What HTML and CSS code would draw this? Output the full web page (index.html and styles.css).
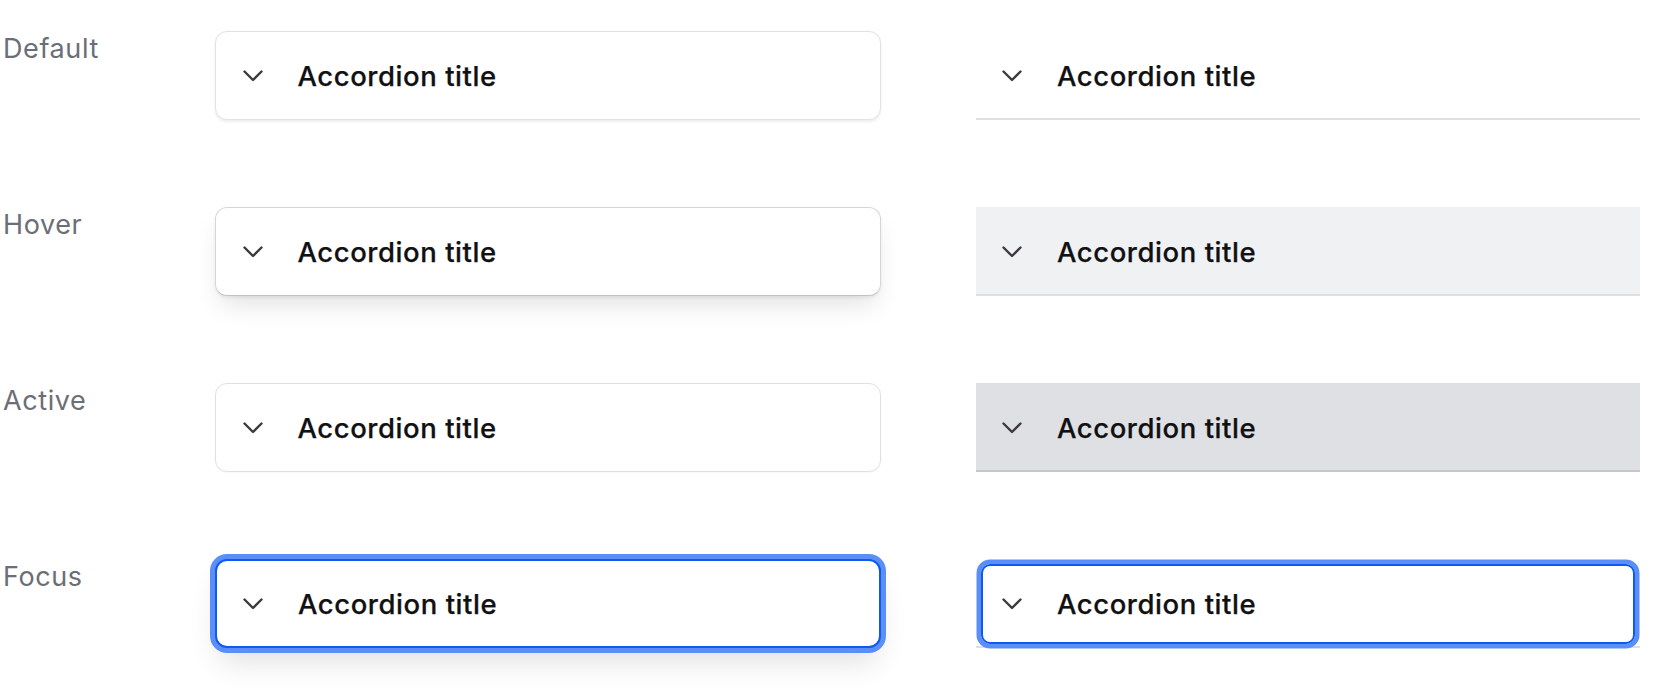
FILE: index.html
```html
<!DOCTYPE html>
<html lang="en">
<head>
<meta charset="utf-8">
<title>Accordion states</title>
<link rel="stylesheet" href="styles.css">
</head>
<body>
<div class="states">
  <div class="label">Default</div>
  <div class="cell">
    <div class="acc box">
      <svg class="chev" viewBox="0 0 20 12"><polyline points="1.5,1.5 10,10 18.5,1.5"/></svg>
      <span class="title">Accordion title</span>
    </div>
  </div>
  <div class="cell">
    <div class="acc flush">
      <svg class="chev" viewBox="0 0 20 12"><polyline points="1.5,1.5 10,10 18.5,1.5"/></svg>
      <span class="title">Accordion title</span>
    </div>
  </div>

  <div class="label">Hover</div>
  <div class="cell">
    <div class="acc box hover">
      <svg class="chev" viewBox="0 0 20 12"><polyline points="1.5,1.5 10,10 18.5,1.5"/></svg>
      <span class="title">Accordion title</span>
    </div>
  </div>
  <div class="cell">
    <div class="acc flush hover">
      <svg class="chev" viewBox="0 0 20 12"><polyline points="1.5,1.5 10,10 18.5,1.5"/></svg>
      <span class="title">Accordion title</span>
    </div>
  </div>

  <div class="label">Active</div>
  <div class="cell">
    <div class="acc box active">
      <svg class="chev" viewBox="0 0 20 12"><polyline points="1.5,1.5 10,10 18.5,1.5"/></svg>
      <span class="title">Accordion title</span>
    </div>
  </div>
  <div class="cell">
    <div class="acc flush active">
      <svg class="chev" viewBox="0 0 20 12"><polyline points="1.5,1.5 10,10 18.5,1.5"/></svg>
      <span class="title">Accordion title</span>
    </div>
  </div>

  <div class="label">Focus</div>
  <div class="cell">
    <div class="acc box focus">
      <svg class="chev" viewBox="0 0 20 12"><polyline points="1.5,1.5 10,10 18.5,1.5"/></svg>
      <span class="title">Accordion title</span>
    </div>
  </div>
  <div class="cell">
    <div class="acc flush focus">
      <svg class="chev" viewBox="0 0 20 12"><polyline points="1.5,1.5 10,10 18.5,1.5"/></svg>
      <span class="title">Accordion title</span>
    </div>
  </div>
</div>
</body>
</html>
```
FILE: styles.css
```css
html, body {
  margin: 0;
  padding: 0;
  background: #ffffff;
}

body {
  font-family: Inter, "Noto Sans", "Liberation Sans", sans-serif;
  color: #18181b;
  min-height: 692px;
}

.states {
  display: grid;
  grid-template-columns: 215px 761px 664px;
  grid-auto-rows: 89px;
  row-gap: 87px;
  padding-top: 31px;
  padding-bottom: 44px;
}

.label {
  font-size: 27px;
  line-height: 36px;
  letter-spacing: 0.6px;
  color: #6b6e76;
  padding-left: 3px;
}

.cell {
  display: flex;
}

.acc {
  box-sizing: border-box;
  height: 89px;
  display: flex;
  align-items: center;
  position: relative;
}

.chev {
  width: 20px;
  height: 12px;
  flex: none;
  fill: none;
  stroke: #3a3a40;
  stroke-width: 2.4;
  stroke-linecap: round;
  stroke-linejoin: round;
  margin-right: 35px;
}

.title {
  font-size: 27.5px;
  font-weight: 500;
  letter-spacing: 0.55px;
  color: #111113;
  -webkit-text-stroke: 0.25px #111113;
}

/* Boxed variant */
.box {
  width: 666px;
  background: #fff;
  border: 1.5px solid #e2e2e5;
  border-radius: 12px;
  padding-left: 26.5px;
  box-shadow: 0 1.5px 3px rgba(0, 0, 0, 0.07);
}

.box.hover {
  border-color: #d6d6da;
  border-bottom-color: #c2c3c8;
  box-shadow: 0 14px 26px -6px rgba(0, 0, 0, 0.12), 0 2px 3px rgba(0, 0, 0, 0.06);
}

.box.active {
  border-color: #e0e0e3;
  box-shadow: 0 1px 2px rgba(0, 0, 0, 0.03);
}

.box.focus {
  border: 2px solid #1059ee;
  padding-left: 26px;
  box-shadow: 0 0 0 5px #5a8ff9, 0 18px 30px -4px rgba(0, 0, 0, 0.12);
}

/* Flush variant */
.flush {
  width: 664px;
  border-bottom: 2px solid #dedfe3;
  padding-left: 26px;
  padding-top: 2px;
}

.flush.hover {
  background: #f0f1f3;
}

.flush.active {
  background: #dfe0e3;
  border-bottom-color: #c7c8cc;
}

.flush.focus::after {
  content: "";
  position: absolute;
  top: 5px;
  left: 5px;
  right: 5px;
  bottom: 2px;
  border: 2px solid #1059ee;
  border-radius: 9px;
  box-shadow: 0 0 0 4.5px #5a8ff9;
  pointer-events: none;
}
```
